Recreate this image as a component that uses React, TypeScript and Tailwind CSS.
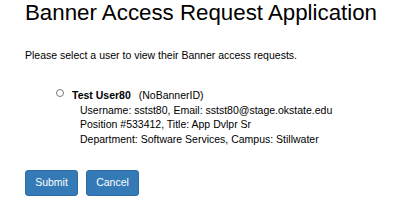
import { useState } from "react";

type Person = {
  id: string;
  name: string;
  bannerId: string;
  username: string;
  email: string;
  position: string;
  title: string;
  department: string;
  campus: string;
};

const people: Person[] = [
  {
    id: "sstst80",
    name: "Test User80",
    bannerId: "NoBannerID",
    username: "sstst80",
    email: "sstst80@stage.okstate.edu",
    position: "533412",
    title: "App Dvlpr Sr",
    department: "Software Services",
    campus: "Stillwater",
  },
];

export default function App() {
  const [selected, setSelected] = useState<string | null>(null);

  return (
    <div className="min-h-screen bg-white text-black font-['Liberation_Sans',Arial,sans-serif] px-[25px] pt-px">
      <h1 className="text-[22.3px] leading-[24px] font-normal whitespace-nowrap">
        Banner Access Request Application
      </h1>
      <p className="mt-[23px] text-[10.5px] leading-[14px]">
        Please select a user to view their Banner access requests.
      </p>

      <div className="mt-[26px] pl-[31px] text-[10.5px] leading-[14.5px]">
        {people.map((p) => (
          <label key={p.id} className="flex items-start gap-[8px] cursor-pointer">
            <input
              type="radio"
              name="user"
              className="mt-[1px] w-[8px] h-[8px] accent-gray-500"
              checked={selected === p.id}
              onChange={() => setSelected(p.id)}
            />
            <div>
              <div>
                <span className="font-bold">{p.name}</span>
                <span className="ml-[8px]">({p.bannerId})</span>
              </div>
              <div className="pl-[8px]">
                <div>
                  Username: {p.username}, Email: {p.email}
                </div>
                <div>
                  Position #{p.position}, Title: {p.title}
                </div>
                <div>
                  Department: {p.department}, Campus: {p.campus}
                </div>
              </div>
            </div>
          </label>
        ))}
      </div>

      <div className="mt-[24px] flex gap-[8px]">
        <button className="w-[53px] h-[26px] rounded-[3px] bg-[#337ab7] border border-[#2e6da4] text-white text-[10.5px]">
          Submit
        </button>
        <button className="w-[53px] h-[26px] rounded-[3px] bg-[#337ab7] border border-[#2e6da4] text-white text-[10.5px]">
          Cancel
        </button>
      </div>
    </div>
  );
}
